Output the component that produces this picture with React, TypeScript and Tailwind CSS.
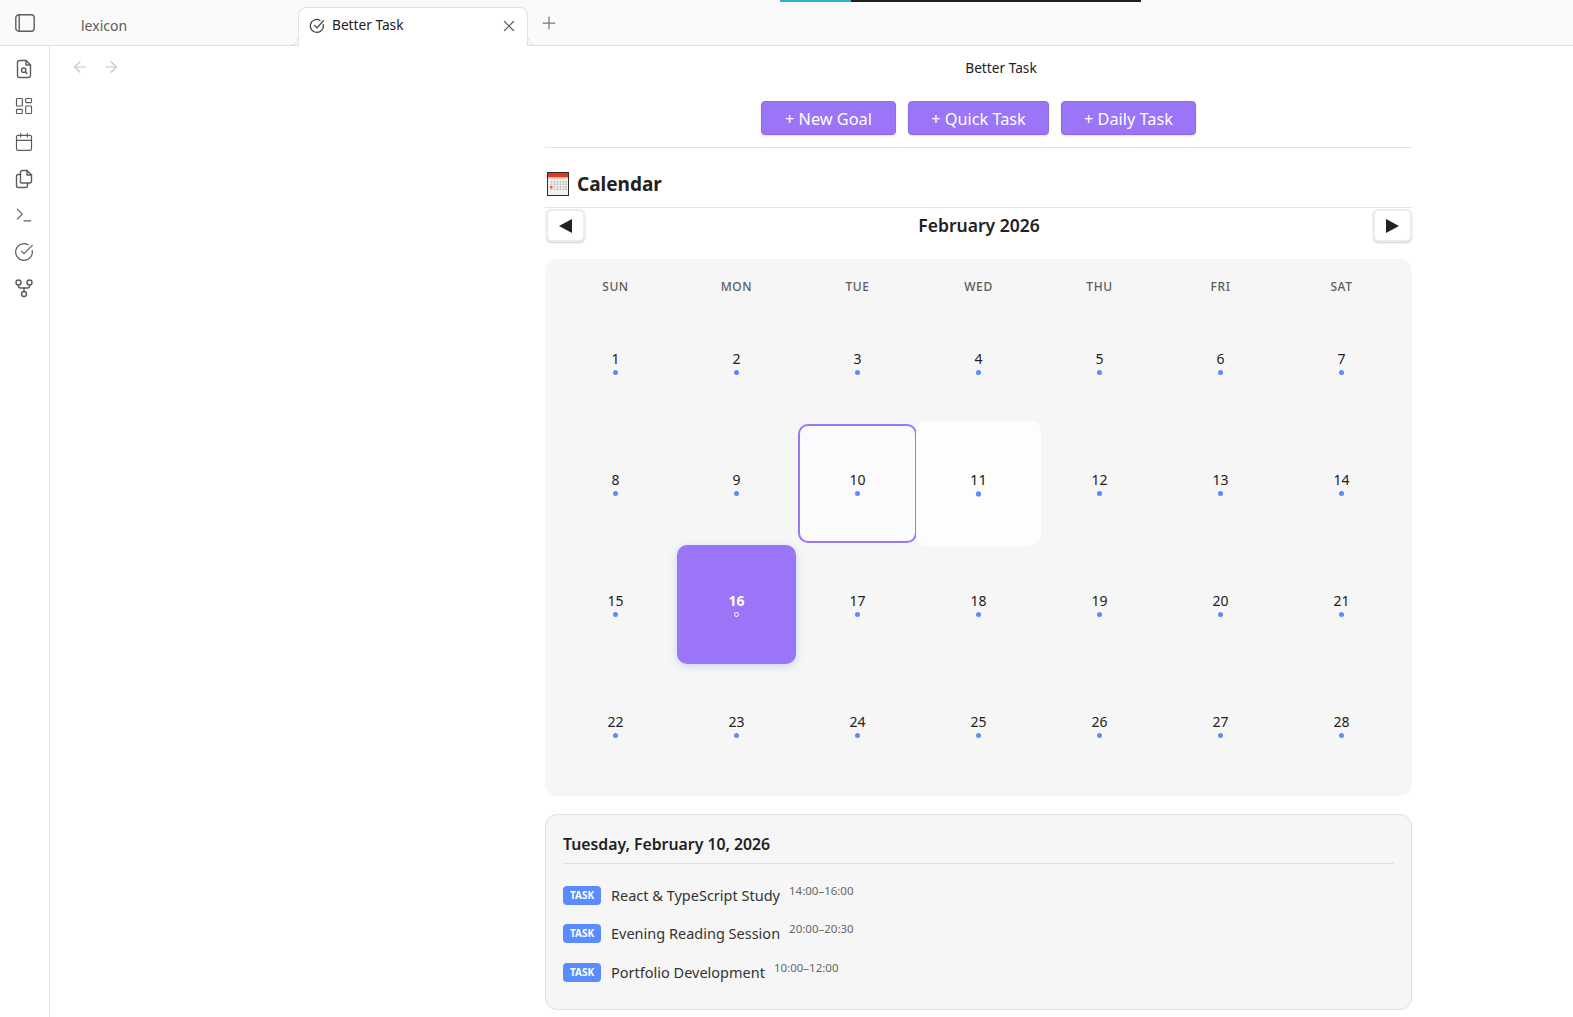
import { ArrowLeft, ArrowRight, Calendar, CircleCheckBig, LayoutDashboard, Plus, Terminal, X } from 'lucide-react';

const weekdays = ['SUN', 'MON', 'TUE', 'WED', 'THU', 'FRI', 'SAT'];
const days = Array.from({ length: 28 }, (_, i) => i + 1);

const tasks = [
  { name: 'React & TypeScript Study', time: '14:00–16:00' },
  { name: 'Evening Reading Session', time: '20:00–20:30' },
  { name: 'Portfolio Development', time: '10:00–12:00' },
];

const goalButtons = [
  { label: '+ New Goal', width: 'w-[135px]' },
  { label: '+ Quick Task', width: 'w-[141px]' },
  { label: '+ Daily Task', width: 'w-[135px]' },
];

const ribbonClass = 'w-5 h-5 text-[#5c5c5c]';

function SidebarToggle() {
  return (
    <svg viewBox="0 0 20 18" className="w-5 h-[18px] text-[#5c5c5c]" fill="none" stroke="currentColor" strokeWidth="1.4">
      <rect x="0.8" y="0.8" width="18.4" height="16.4" rx="3" />
      <line x1="4.2" y1="1" x2="4.2" y2="17" />
    </svg>
  );
}

function FileSearchIcon() {
  return (
    <svg viewBox="0 0 20 20" className={ribbonClass} fill="none" stroke="currentColor" strokeWidth="1.4" strokeLinejoin="round" strokeLinecap="round">
      <path d="M12 1.5 H5.5 A2 2 0 0 0 3.5 3.5 V16.5 A2 2 0 0 0 5.5 18.5 H14.5 A2 2 0 0 0 16.5 16.5 V6 Z" />
      <path d="M12 1.5 V6 H16.5" />
      <circle cx="9.7" cy="11.2" r="2.2" />
      <path d="M11.4 12.9 L13 14.5" />
    </svg>
  );
}

function FilesIcon() {
  return (
    <svg viewBox="0 0 20 20" className={ribbonClass} fill="none" stroke="currentColor" strokeWidth="1.4" strokeLinejoin="round" strokeLinecap="round">
      <path d="M6.5 13.5 V3.5 A2 2 0 0 1 8.5 1.5 H13 L17.5 6 V12 A2 2 0 0 1 15.5 14 H8 A1.5 1.5 0 0 1 6.5 13.5" />
      <path d="M13 1.5 V6 H17.5" />
      <path d="M6.5 5.5 H4.5 A2 2 0 0 0 2.5 7.5 V16.5 A2 2 0 0 0 4.5 18.5 H11.5 A2 2 0 0 0 13.5 16.5 V14" />
    </svg>
  );
}

function GraphIcon() {
  return (
    <svg viewBox="0 0 20 20" className={ribbonClass} fill="none" stroke="currentColor" strokeWidth="1.4">
      <circle cx="4.5" cy="4.5" r="2.5" />
      <circle cx="15.5" cy="4.5" r="2.5" />
      <circle cx="10" cy="16" r="2.5" />
      <path d="M4.5 7 V8 Q4.5 10 6.5 10 H13.5 Q15.5 10 15.5 8 V7 M10 10 V13.5" />
    </svg>
  );
}

function TabCheckIcon() {
  return (
    <svg viewBox="0 0 16 16" className="w-4 h-4 text-[#444444] mr-[7px] -ml-px -mt-[3px]" fill="none" stroke="currentColor" strokeWidth="1.3" strokeLinecap="round" strokeLinejoin="round">
      <path d="M14.2 6.6 A6.5 6.5 0 1 1 10.9 2.2" />
      <path d="M5.5 7.4 L8 9.9 L14.4 2.8" />
    </svg>
  );
}

function CalendarEmoji() {
  return (
    <svg viewBox="0 0 22 24" className="w-[22px] h-6">
      <rect x="0.5" y="0.5" width="21" height="23" fill="#f4f2f0" stroke="#2a2a2a" strokeWidth="1" />
      <rect x="1" y="1" width="20" height="4.5" fill="#e0371d" />
      <rect x="1" y="5.5" width="20" height="1.2" fill="#f6c4b4" />
      {[9, 11.5, 14, 16.5].map((y) =>
        [4.5, 7.5, 10.5, 13.5, 16.5, 19].map((x) => <rect key={`${x}-${y}`} x={x - 0.8} y={y} width="1.6" height="1.6" fill="#b9b7b5" />)
      )}
      <rect x="3" y="14" width="2.4" height="2.4" fill="#e8614a" />
    </svg>
  );
}

function DayCell({ day }: { day: number }) {
  const isToday = day === 16;
  const isSelected = day === 10;
  const isHover = day === 11;
  return (
    <div
      className={`aspect-square rounded-[10px] flex flex-col items-center justify-center pb-[2px] ${
        isToday ? 'bg-[#9a75f8] text-white font-bold shadow-[0_2px_8px_rgba(90,140,255,0.3)]' : 'text-[#222222]'
      } ${isSelected ? 'bg-[#fbfafc] border-2 border-[#9a75f8]' : ''} ${isHover ? 'bg-[#fdfdfd] scale-[1.05]' : ''}`}
    >
      <span className="text-[14px] leading-[20px]">{day}</span>
      {isToday ? (
        <span className="mt-px w-[5px] h-[5px] rounded-full border border-white" />
      ) : (
        <span className="mt-px w-[5px] h-[5px] rounded-full bg-[#5a8cff]" />
      )}
    </div>
  );
}

export default function App() {
  return (
    <div className="h-[1017px] overflow-hidden bg-white text-[#222222] flex flex-col font-['Noto_Sans','Open_Sans',sans-serif]">
      {/* Tab strip */}
      <div className="relative h-[46px] shrink-0 bg-[#fafafa] border-b border-[#e0e0e0] flex items-end">
        <div className="absolute top-0 left-[780px] flex h-0.5">
          <div className="w-[71px] bg-[#2bb3c9]" />
          <div className="w-[290px] bg-[#1e1e1e]" />
        </div>
        <div className="w-[50px] h-full flex items-center justify-center">
          <SidebarToggle />
        </div>
        <div className="w-[248px] h-full flex items-center pl-[31px] pt-[6px] text-[14px] text-[#5c5c5c]">lexicon</div>
        <div className="relative w-[230px] h-[39px] -mb-px bg-white border border-b-0 border-[#e0e0e0] rounded-t-lg flex items-center pl-[11px] pr-[9px] text-[13.7px]">
          <span className="absolute -left-[9px] bottom-0 w-2 h-2 border-r border-b border-[#e0e0e0] rounded-br-lg" />
          <span className="absolute -right-[9px] bottom-0 w-2 h-2 border-l border-b border-[#e0e0e0] rounded-bl-lg" />
          <TabCheckIcon />
          <span className="flex-1 -mt-1">Better Task</span>
          <X className="w-[18px] h-[18px] text-[#5c5c5c] -mt-0.5" strokeWidth={1.6} />
        </div>
        <div className="h-full flex items-center pl-[11px]">
          <Plus className="w-5 h-5 text-[#777777]" strokeWidth={1.5} />
        </div>
      </div>

      <div className="flex-1 flex min-h-0">
        {/* Ribbon */}
        <div className="w-[50px] shrink-0 border-r border-[#e0e0e0] flex flex-col items-center pt-[13px] pr-px gap-[16.5px]">
          <FileSearchIcon />
          <LayoutDashboard className={ribbonClass} strokeWidth={1.4} />
          <Calendar className={ribbonClass} strokeWidth={1.4} />
          <FilesIcon />
          <Terminal className={ribbonClass} strokeWidth={1.4} />
          <CircleCheckBig className={ribbonClass} strokeWidth={1.4} />
          <GraphIcon />
        </div>

        {/* Empty left pane */}
        <div className="w-[478px] shrink-0 pt-[12px] pl-[21px] flex gap-[13px] text-[#c4c4c4]">
          <ArrowLeft className="w-[18px] h-[18px]" strokeWidth={1.5} />
          <ArrowRight className="w-[18px] h-[18px]" strokeWidth={1.5} />
        </div>

        {/* Better Task view */}
        <div className="w-[885px] pl-[17px] shrink-0">
          <div className="w-[867px]">
            <div className="h-[44px] pl-[45px] flex items-center justify-center text-[13.7px]">Better Task</div>
            <div className="mt-[11px] flex justify-center gap-3 pb-3 border-b border-[#e3e3e3]">
              {goalButtons.map((b) => (
                <button
                  key={b.label}
                  className={`${b.width} h-[34px] pt-[2px] rounded bg-[#9a75f8] border border-[#8f69ee] text-white text-[16.3px] shadow-[0_1px_2px_rgba(0,0,0,0.12)]`}
                >
                  {b.label}
                </button>
              ))}
            </div>

            <div className="mt-[23px] h-[37px] flex items-center gap-[8px] border-b border-[#e3e3e3] pb-[11px]">
              <span className="ml-[2px]">
                <CalendarEmoji />
              </span>
              <h2 className="text-[19px] font-bold leading-6">Calendar</h2>
            </div>

            <div className="flex items-center justify-between h-[35px]">
              <button className="w-[39px] h-[33px] ml-px rounded-md bg-white border-2 border-[#ececec] shadow-[0_1px_2px_rgba(0,0,0,0.2)] flex items-center justify-center">
                <span className="w-0 h-0 border-y-[7px] border-y-transparent border-r-[13px] border-r-[#222222]" />
              </button>
              <span className="text-[17.5px] font-semibold">February 2026</span>
              <button className="w-[39px] h-[33px] rounded-md bg-white border-2 border-[#ececec] shadow-[0_1px_2px_rgba(0,0,0,0.2)] flex items-center justify-center">
                <span className="w-0 h-0 border-y-[7px] border-y-transparent border-l-[13px] border-l-[#222222]" />
              </button>
            </div>

            {/* Month grid */}
            <div className="mt-[16px] bg-[#f6f6f6] rounded-xl px-[11px] pt-[14px] pb-[11px]">
              <div className="grid grid-cols-7 gap-x-[2px] h-[28px] items-center text-center text-[12px] font-medium text-[#5c5c5c] tracking-[0.6px]">
                {weekdays.map((d) => (
                  <div key={d}>{d}</div>
                ))}
              </div>
              <div className="mt-[2px] grid grid-cols-7 gap-[2px]">
                {days.map((d) => (
                  <DayCell key={d} day={d} />
                ))}
              </div>
            </div>

            {/* Selected day */}
            <div className="mt-[18px] bg-[#f6f6f6] border border-[#e0e0e0] rounded-xl px-[17px] pt-[17px] h-[196px]">
              <h3 className="text-[15.8px] font-semibold leading-[24px] pb-[7px] border-b border-[#e0e0e0]">Tuesday, February 10, 2026</h3>
              <div className="mt-[22px] flex flex-col gap-[19.4px]">
                {tasks.map((t) => (
                  <div key={t.name} className="flex items-start h-[19px]">
                    <span className="h-[19px] w-[38px] rounded bg-[#5a8cff] text-white text-[10px] font-bold flex items-center justify-center">TASK</span>
                    <span className="ml-[10px] -mt-px text-[14.5px] leading-[20px] text-[#333333]">{t.name}</span>
                    <span className="ml-[9px] -mt-[3px] text-[11.5px] leading-[16px] text-[#666666]">{t.time}</span>
                  </div>
                ))}
              </div>
            </div>
          </div>
        </div>
      </div>
    </div>
  );
}
